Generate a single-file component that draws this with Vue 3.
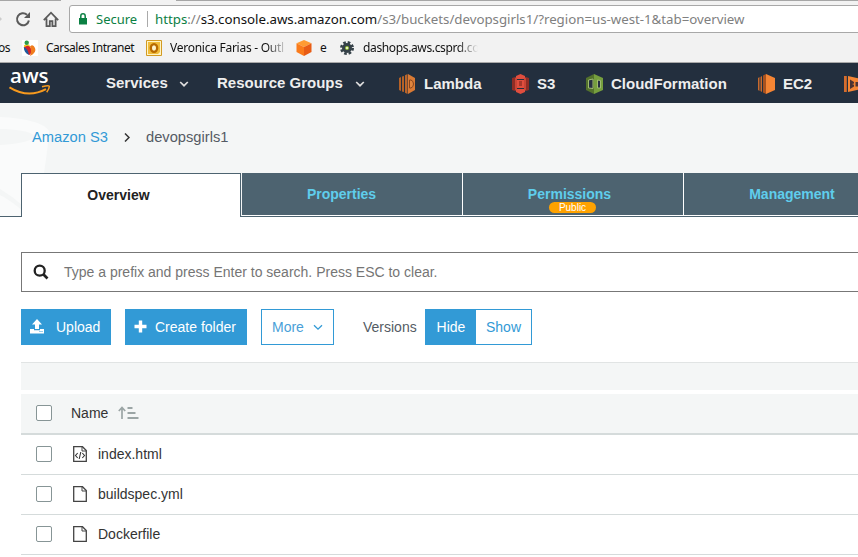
<script setup>
import { ref } from 'vue'

const services = [
  { id: 'lambda', name: 'Lambda', width: 113 },
  { id: 's3', name: 'S3', width: 74 },
  { id: 'cf', name: 'CloudFormation', width: 172 },
  { id: 'ec2', name: 'EC2', width: 86 },
  { id: 'code', name: '', width: 30 }
]
const tabs = [
  { name: 'Overview', cls: 't-overview' },
  { name: 'Properties', cls: 't-properties' },
  { name: 'Permissions', cls: 't-permissions', badge: 'Public' },
  { name: 'Management', cls: 't-management' }
]
const active = ref('Overview')
const files = [
  { name: 'index.html', code: true },
  { name: 'buildspec.yml', code: false },
  { name: 'Dockerfile', code: false }
]
</script>

<template>
  <div class="page">
    <header class="chrome">
      <div class="strip"><i class="s1"></i><i class="s2"></i></div>
      <div class="urlrow">
        <svg class="ctl" width="69" height="28" viewBox="0 0 69 28">
          <path d="M0 12l2 2-2 2z" fill="#ccc" />
          <path d="M27 9.700A6 6 0 1 0 28.900 15.500" fill="none" stroke="#5a5a5a" stroke-width="2" />
          <path d="M30 7v6h-6z" fill="#5a5a5a" />
          <path d="M43.800 15.200L51 7.700l7.200 7.500M46.500 13.500v7.600h3.300v-5h2.600v5h3.200v-7.600" fill="none" stroke="#5a5a5a" stroke-width="1.800" />
        </svg>
        <div class="url">
          <svg width="10" height="13" viewBox="0 0 10 13">
            <path d="M1 5h8v6.500H1z" fill="#0b8043" />
            <path d="M2.800 5V3a2.200 2.200 0 0 1 4.400 0v2" fill="none" stroke="#0b8043" stroke-width="1.500" />
          </svg>
          <span class="secure">Secure</span>
          <i class="bar"></i>
          <span class="addr"><b>https</b>://<em>s3.console.aws.amazon.com</em>/s3/buckets/devopsgirls1/?region=us-west-1&amp;tab=overview</span>
        </div>
      </div>
      <div class="bookmarks">
        <span class="bk b0">os</span>
        <svg width="16" height="16" viewBox="0 0 16 16">
          <path d="M0 0h16v16H0z" fill="#fff" />
          <path d="M2 5l5-.5L8.500 7 2 8z" fill="#f4cf24" />
          <circle cx="4.700" cy="2.700" r="2.200" fill="#2f9b48" />
          <path d="M2 7.500Q6 4 8.500 7.500T8 15Q4 14.500 2 7.500z" fill="#d5242b" />
          <path d="M1.800 7Q6 8.500 7 15 2 13 1.800 7z" fill="#205b9f" />
          <path d="M8 6.500q3-3 5 1.500t-5 8q2-5 0-9.500z" fill="#f07c1d" />
        </svg>
        <span class="bk b1">Carsales Intranet</span>
        <svg width="16" height="16" viewBox="0 0 16 16">
          <path d="M.5.5h15v15H.5z" fill="#fff4c4" stroke="#d29a22" />
          <path d="M2 2h12v10l-2 2H2z" fill="#f0bc3a" />
          <ellipse cx="8" cy="8" rx="3.200" ry="3.800" fill="#fff4ca" stroke="#b86a00" stroke-width="2.300" />
        </svg>
        <span class="bk b2">Veronica Farias - Outl</span>
        <svg width="16" height="16" viewBox="0 0 16 16">
          <path d="M8 0l7.500 3.200L8 7 .5 3.200z" fill="#ff9b32" />
          <path d="M.5 3.200L8 7v9L.5 12z" fill="#fa7b1b" />
          <path d="M15.500 3.200L8 7v9l7.500-4z" fill="#e85c15" />
        </svg>
        <span class="bk b3">e</span>
        <svg width="16" height="16" viewBox="0 0 16 16">
          <circle cx="8" cy="8" r="5.700" fill="none" stroke="#354148" stroke-width="2.600" stroke-dasharray="2.600 1.880" />
          <circle cx="8" cy="8" r="3.500" fill="#85b526" stroke="#354148" stroke-width="3" />
          <circle cx="8" cy="8" r="1.300" fill="#e6f2ba" />
        </svg>
        <span class="bk b4">dashops.aws.csprd.co</span>
      </div>
    </header>

    <nav class="nav">
      <div class="logo">
        <span>aws</span>
        <svg width="42" height="12" viewBox="0 0 42 12">
          <path d="M.5 2.300Q19 13.800 37 4.200" fill="none" stroke="#f79a1e" stroke-width="2" />
          <path d="M33 1.700q6.500-1.600 7.200-.5.500 2-2.500 6.100" fill="none" stroke="#f79a1e" stroke-width="1.500" />
        </svg>
      </div>
      <span class="menu m1">Services</span>
      <svg class="chev" width="10" height="7" viewBox="0 0 10 7"><path d="M1.200 1L5 4.700 8.800 1" fill="none" stroke="#ddd" stroke-width="1.700" /></svg>
      <span class="menu m2">Resource Groups</span>
      <svg class="chev c2" width="10" height="7" viewBox="0 0 10 7"><path d="M1.200 1L5 4.700 8.800 1" fill="none" stroke="#ddd" stroke-width="1.700" /></svg>
      <div v-for="s in services" :key="s.id" class="svc" :style="{ width: s.width + 'px' }">
        <svg v-if="s.id === 'lambda'" width="17" height="20" viewBox="0 0 17 20">
          <path d="M0 4l2-1v14l-2-1zM3 2.500L5 2v16l-2-.5z" fill="#b46127" />
          <path d="M6 1.300L8.500 0v20L6 18.700z" fill="#b9652b" />
          <path d="M9 0l7 4v12l-7 4z" fill="#d97a34" />
          <path d="M10.500 6h1.500q2.500 1 2.500 4T12 14h-1.500z" fill="#e0853e" stroke="#86451e" />
        </svg>
        <svg v-else-if="s.id === 's3'" width="17" height="20" viewBox="0 0 17 20">
          <path d="M0 4l3-1v14l-3-1zM14 3l3 1v12l-3 1z" fill="#902d25" />
          <path d="M8.500 0L13 2v3H4V2zM4 15h9v3l-4.500 2L4 18zM4 6h9v8H4z" fill="#e04e3e" />
          <path d="M3 3l2 2v10l-2 2zM14 3l-2 2v10l2 2z" fill="#c94435" />
          <path d="M7 7h3v5H7z" fill="#a8372c" />
        </svg>
        <svg v-else-if="s.id === 'cf'" width="17" height="20" viewBox="0 0 17 20">
          <path d="M0 4l8-4v20l-8-4z" fill="#53722c" />
          <path d="M8 0l9 4v12l-9 4z" fill="#769f3e" />
          <path d="M2.500 6L7 5v9.500L2.500 14zM11.500 6l3 .5V14h-3z" fill="#263041" stroke="#a0bc72" />
        </svg>
        <svg v-else-if="s.id === 'ec2'" width="17" height="20" viewBox="0 0 17 20">
          <path d="M0 4l1.500-1v14L0 16zM2.500 3L4 2v16l-1.500-1z" fill="#c96a2d" />
          <path d="M5 1.500L8 0v20l-3-1.500z" fill="#a9521f" />
          <path d="M8 0l9 4v12l-9 4z" fill="#f58534" />
        </svg>
        <svg v-else width="17" height="20" viewBox="0 0 17 20">
          <path d="M0 2h2.800v16H0z" fill="#d56d2d" />
          <path d="M4 2l13 3v10L4 18z" fill="#f58534" />
          <path d="M6 5.500l4 2.500v1.500L8 10l2 .8v1.700L6 15zM11.500 8h3v4.500h-3z" fill="#4d3433" />
        </svg>
        <span>{{ s.name }}</span>
      </div>
    </nav>

    <section class="head">
      <svg class="bucket" width="50" height="113" viewBox="0 0 50 113">
        <path d="M0 14C24 15 45 20 49 28Q49 36 44 70V113H0z" fill="#fafbfb" />
        <path d="M0 26C15 26 30 28 35 33Q32 40 0 42zM0 86q12 7 23 17v5Q10 97 0 92z" fill="#f4f6f6" />
      </svg>
      <div class="crumbs">
        <a>Amazon S3</a>
        <svg width="6" height="9" viewBox="0 0 6 9"><path d="M1 .5l4 4-4 4" fill="none" stroke="#333" stroke-width="1.500" /></svg>
        <span>devopsgirls1</span>
      </div>
      <div class="tabs">
        <div v-for="t in tabs" :key="t.name" class="tab" :class="[t.cls, { on: t.name === active }]" @click="active = t.name">
          <span class="label">{{ t.name }}</span>
          <span v-if="t.badge" class="badge">{{ t.badge }}</span>
        </div>
      </div>
    </section>

    <main>
      <div class="search">
        <svg width="16" height="16" viewBox="0 0 16 16">
          <circle cx="6.700" cy="6.700" r="5" fill="none" stroke="#222" stroke-width="2.300" />
          <path d="M10.300 10.300l4.200 4.200" stroke="#222" stroke-width="2.700" />
        </svg>
        <span>Type a prefix and press Enter to search. Press ESC to clear.</span>
      </div>
      <div class="actions">
        <div class="btn up">
          <svg width="16" height="15" viewBox="0 0 16 15">
            <path d="M8 0l5 5.500h-3V10H6V5.500H3z" fill="#fff" />
            <path d="M1 10h4v1.300h6V10h4v4.500H1z" fill="#fff" />
            <path d="M10.500 12.500h1M12.500 12.500h1" stroke="#329ad6" />
          </svg>
          <span>Upload</span>
        </div>
        <div class="btn create">
          <svg width="13" height="13" viewBox="0 0 13 13"><path d="M6.500 .5v12M.5 6.500h12" stroke="#fff" stroke-width="3.400" /></svg>
          <span>Create folder</span>
        </div>
        <div class="btn more">
          <span>More</span>
          <svg width="10" height="7" viewBox="0 0 10 7"><path d="M1 1.300l4 3.900 4-3.900" fill="none" stroke="#329ad6" stroke-width="1.300" /></svg>
        </div>
        <span class="ver">Versions</span>
        <div class="toggle"><span class="hide">Hide</span><span class="show">Show</span></div>
      </div>
      <div class="blank"></div>
      <div class="row th">
        <i class="check"></i>
        <span class="name">Name</span>
        <svg width="21" height="14" viewBox="0 0 21 14">
          <path d="M4 13V2M.8 5L4 1.500 7.200 5" fill="none" stroke="#9ba5a5" stroke-width="1.700" />
          <path d="M9.500 2h5M9.500 7h8M9.500 12h11" stroke="#9ba5a5" stroke-width="2" />
        </svg>
      </div>
      <div v-for="f in files" :key="f.name" class="row">
        <i class="check"></i>
        <svg class="file" width="14" height="16" viewBox="0 0 14 16">
          <path d="M.7.7h8.800l3.800 3.800v10.800H.7z" fill="#fff" stroke="#444" stroke-width="1.300" />
          <path d="M9 1v4h4" fill="none" stroke="#444" />
          <path v-if="f.code" d="M4.700 7L2.500 9.500 4.700 12M9.300 7l2.200 2.500L9.300 12M7.800 6L6.200 13" fill="none" stroke="#333" stroke-width="1.100" />
        </svg>
        <span>{{ f.name }}</span>
      </div>
    </main>
  </div>
</template>

<style>
body { background: #fff; overflow: hidden; }
</style>

<style scoped>
* { box-sizing: border-box; }
.page { width: 858px; height: 557px; overflow: hidden; font-family: "Liberation Sans", Arial, sans-serif; font-size: 14px; color: #333; white-space: nowrap; }
svg, span, i { flex: none; display: block; }
.chrome { height: 63px; background: #f2f2f2; border-bottom: 1px solid #a9a9a9; font-family: "Noto Sans", "Open Sans", sans-serif; }
.strip { height: 5px; display: flex; justify-content: space-between; }
.strip i { height: 1px; background: #a6a6a6; }
.s1 { width: 61px; }
.s2 { width: 682px; }
.urlrow { display: flex; height: 28px; }
.url { width: 800px; flex: none; height: 28px; border: 1px solid #a8a8a8; border-radius: 3px; background: #fff; display: flex; align-items: center; padding-left: 8px; }
.secure { width: 51px; margin-left: 8px; color: #0b8043; font-size: 13px; letter-spacing: 0; }
.bar { width: 1px; height: 16px; background: #aaa; }
.addr { margin-left: 7px; font-size: 13.300px; letter-spacing: -.025px; color: #808080; }
.addr b { font-weight: 400; color: #0b8043; }
.addr em { font-style: normal; color: #111; }
.bookmarks { height: 29px; display: flex; align-items: center; font-size: 12px; color: #111; letter-spacing: -.48px; }
.bk { line-height: 16px; }
.b0 { width: 22px; margin-left: -2px; margin-right: 2px; }
.b1 { width: 100px; margin-left: 8px; }
.b2 { width: 118px; margin-left: 8px; margin-right: 8px; letter-spacing: -.26px; }
.b3 { width: 19px; margin-left: 8px; }
.b4 { width: 115px; margin-left: 8px; letter-spacing: -.36px; }
.b2, .b4 { -webkit-mask-image: linear-gradient(to right, #000 82%, transparent); mask-image: linear-gradient(to right, #000 82%, transparent); }
.nav { height: 40px; background: #232f3e; color: #eee; display: flex; align-items: center; font-weight: 700; font-size: 15px; }
.logo { width: 106px; height: 40px; padding-left: 9px; padding-top: 1px; flex: none; }
.logo span { font: 600 20.500px/22px "Open Sans", sans-serif; height: 22px; color: #fff; padding-left: 1px; }
.logo svg { margin-top: -1px; }
.menu { margin-top: -1px; }
.m1 { width: 73px; }
.m2 { width: 138px; margin-left: 28px; }
.chev { margin-top: 2px; }
.c2 { margin-right: 34px; }
.svc { flex: none; display: flex; align-items: center; margin-top: 1px; }
.svc span { margin-left: 8px; }
.head { height: 114px; background: #f4f6f6; position: relative; display: flex; flex-direction: column; justify-content: space-between; }
.bucket { position: absolute; left: 0; top: 0; }
.crumbs { position: relative; display: flex; align-items: center; height: 68px; padding-left: 32px; font-size: 14.700px; color: #545b64; }
.crumbs a { width: 92px; color: #329ad6; }
.crumbs span { margin-left: 16px; }
.tabs { position: relative; display: flex; height: 44px; padding-left: 21px; border-bottom: 1px solid #4d6370; }
.tab { flex: none; width: 221px; height: 43px; background: #4d6370; border-right: 1px solid #fff; border-bottom: 1px solid #fff; color: #5fcdec; text-align: center; font-weight: 700; font-size: 14px; padding-top: 12px; }
.tab.on { width: 220px; height: 44px; background: #fff; color: #222; border: 1px solid #4d6370; border-bottom: 0; margin-right: 1px; }
.t-overview { padding-right: 25px; }
.t-properties { padding-right: 21px; }
.t-permissions { padding-right: 7px; }
.t-management { padding-right: 4px; }
.label { line-height: 18px; }
.badge { position: relative; left: 3px; margin: -1px auto 0; width: 47px; height: 11px; border-radius: 6px; background: #ffa200; color: #fff; font-weight: 400; font-size: 10px; line-height: 12px; }
main { padding: 35px 0 0 21px; }
.search { width: 850px; height: 40px; border: 1px solid #777; display: flex; align-items: center; padding-left: 11px; font-size: 14px; color: #757575; }
.search span { margin-left: 15px; }
.actions { display: flex; margin-top: 17px; height: 36px; }
.btn { flex: none; height: 36px; display: flex; align-items: center; background: #329ad6; color: #fff; }
.up { width: 90px; padding-left: 8px; }
.up svg { margin-top: -2px; }
.up span { margin-left: 11px; }
.create { width: 122px; margin-left: 14px; padding-left: 9px; }
.create svg { margin-top: -1px; }
.create span { margin-left: 8px; }
.more { width: 73px; margin-left: 14px; padding-left: 10px; background: #fff; border: 1px solid #329ad6; color: #4a9fd8; }
.more svg { margin-left: 9px; }
.ver { line-height: 36px; width: 62px; margin-left: 29px; color: #545b64; }
.toggle { display: flex; width: 107px; height: 36px; border: 1px solid #329ad6; line-height: 34px; color: #329ad6; text-align: center; }
.hide { width: 50px; background: #329ad6; color: #fff; }
.show { width: 55px; }
.blank { margin-top: 17px; height: 28px; background: #f4f6f6; border-top: 1px solid #e1e4e4; }
.row { height: 40px; display: flex; align-items: center; padding: 0 0 1px 15px; border-bottom: 1px solid #d5dbdb; }
.th { margin-top: 4px; height: 41px; background: #f4f6f6; border-bottom: 2px solid #d5dbdb; }
.check { width: 16px; height: 16px; border: 1px solid #879596; border-radius: 2px; background: #fff; }
.name { width: 47px; margin-left: 19px; }
.file { margin-left: 21px; margin-right: 11px; }
</style>
